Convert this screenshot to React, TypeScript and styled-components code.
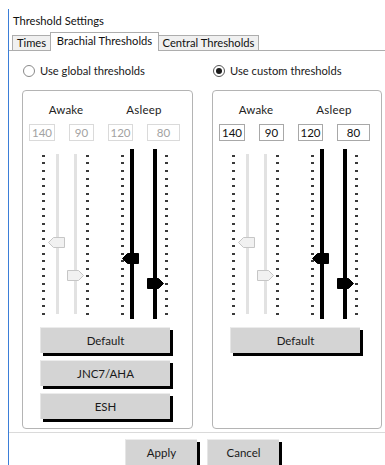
import React from "react";
import styled, { createGlobalStyle, css } from "styled-components";

const Global = createGlobalStyle`
  html, body { margin: 0; padding: 0; background: #ffffff; }
  body { font-family: Lato, "Liberation Sans", sans-serif; font-size: 11px; color: #1a1a1a; }
  * { box-sizing: border-box; }
`;

const Window = styled.div`
  height: 465px;
  padding: 9px 0 0 8px;
  overflow: hidden;
`;

const Frame = styled.div`
  height: 100%;
  border-left: 1px solid #3b7ed8;
  display: flex;
  flex-direction: column;
`;

const Title = styled.div`
  height: 23px;
  padding: 4px 0 0 4px;
  line-height: 16px;
  font-size: 11.2px;
  color: #111;
`;

const TabStrip = styled.div`
  height: 19px;
  display: flex;
  align-items: flex-end;
  padding-left: 3px;
  border-bottom: 1px solid #adadad;
`;

const Tab = styled.div<{ $active?: boolean; $w: number }>`
  width: ${(p) => p.$w}px;
  display: flex;
  align-items: center;
  justify-content: center;
  border: 1px solid #adadad;
  border-bottom: none;
  font-size: 11.2px;
  color: #111;
  white-space: nowrap;
  ${(p) =>
    p.$active
      ? css`
          height: 19px;
          margin: 0 -1px -1px -1px;
          background: #ffffff;
          position: relative;
          z-index: 1;
          padding-bottom: 2px;
        `
      : css`
          height: 15px;
          background: #f0f0f0;
        `}
`;

const TabPage = styled.div`
  height: 383px;
  border-bottom: 1px solid #dadada;
  padding: 12px 0 0 13px;
`;

const Columns = styled.div`
  display: grid;
  grid-template-columns: 171px 170px;
  column-gap: 19px;
`;

const Column = styled.div`
  display: flex;
  flex-direction: column;
`;

const RadioRow = styled.label`
  height: 16px;
  display: flex;
  align-items: center;
  gap: 5px;
  padding-left: 1px;
  font-size: 11.2px;
  color: #1a1a1a;
`;

const RadioCircle = styled.span<{ $checked?: boolean }>`
  width: 12px;
  height: 12px;
  border-radius: 50%;
  border: 1px solid ${(p) => (p.$checked ? "#555" : "#8a8a8a")};
  background: #fff;
  display: flex;
  align-items: center;
  justify-content: center;
  &::after {
    content: "";
    width: 6px;
    height: 6px;
    border-radius: 50%;
    background: ${(p) => (p.$checked ? "#1a1a1a" : "transparent")};
  }
`;

const GroupBox = styled.div`
  margin-top: 11px;
  height: 339px;
  border: 1px solid #b4b4b4;
  border-radius: 4px;
  display: flex;
  flex-direction: column;
`;

const LabelRow = styled.div`
  margin-top: 11px;
  margin-left: 6px;
  height: 16px;
  display: grid;
  grid-template-columns: 74px 82px;
`;

const ColLabel = styled.div`
  text-align: center;
  line-height: 16px;
  font-size: 11.5px;
  letter-spacing: 0.2px;
  color: #222;
`;

const BoxRow = styled.div`
  margin-top: 6px;
  margin-left: 6px;
  display: flex;
  gap: 14px;
`;

const ValueBox = styled.div<{ $w: number; $disabled?: boolean }>`
  width: ${(p) => p.$w}px;
  height: 17px;
  border: 1px solid ${(p) => (p.$disabled ? "#dadada" : "#a8a8a8")};
  color: ${(p) => (p.$disabled ? "#a2a2a2" : "#111")};
  font-size: 11.5px;
  line-height: 15px;
  text-align: center;
  background: #fff;
`;

const SliderRow = styled.div`
  margin-top: 8px;
  margin-left: 19px;
  height: 170px;
  display: flex;
  align-items: flex-start;
`;

const Slider = styled.div<{ $gap: number; $ml: number }>`
  margin-left: ${(p) => p.$ml}px;
  display: flex;
  align-items: flex-start;
  gap: ${(p) => p.$gap}px;
  height: 170px;
`;

const Ticks = styled.div`
  margin-top: 6px;
  width: 3px;
  height: 160px;
  display: flex;
  flex-direction: column;
  justify-content: space-between;
`;

const Tick = styled.span`
  display: block;
  width: 3px;
  height: 2px;
  background: #3a3a3a;
`;

const Track = styled.div<{ $active?: boolean }>`
  position: relative;
  ${(p) =>
    p.$active
      ? css`
          width: 4px;
          height: 170px;
          background: #000;
        `
      : css`
          margin-top: 5px;
          width: 3px;
          height: 160px;
          background: #e2e2e2;
        `}
`;

const ThumbWrap = styled.div<{ $shift: number }>`
  position: absolute;
  left: 50%;
  width: 17px;
  height: 11px;
  margin-left: ${(p) => -8.5 + p.$shift}px;
  display: flex;
`;

const ButtonStack = styled.div`
  margin-top: 8px;
  margin-left: 17px;
  display: flex;
  flex-direction: column;
  gap: 7px;
`;

const PushButton = styled.button<{ $w: number }>`
  width: ${(p) => p.$w}px;
  height: 26px;
  padding: 0;
  border: none;
  border-top: 1px solid #ececec;
  border-left: 1px solid #e6e6e6;
  background: #d4d4d4;
  box-shadow: 3px 3px 0 #000;
  font-family: inherit;
  font-size: 11.5px;
  color: #1a1a1a;
  display: flex;
  align-items: center;
  justify-content: center;
`;

const Footer = styled.div`
  padding: 6px 0 0 116px;
  display: flex;
  gap: 10px;
`;

type SliderDef = { value: number; base: number; ticks: "left" | "right"; gap: number; ml: number; black: boolean };

const Thumb: React.FC<{ dir: "left" | "right"; black: boolean }> = ({ dir, black }) => {
  const fill = black ? "#000" : "#f1f1f1";
  const stroke = black ? "#000" : "#c6c6c6";
  const pts =
    dir === "left"
      ? "0.5,5.5 5.5,0.5 16.5,0.5 16.5,10.5 5.5,10.5"
      : "0.5,0.5 11.5,0.5 16.5,5.5 11.5,10.5 0.5,10.5";
  return (
    <svg width="17" height="11" viewBox="0 0 17 11">
      <polygon points={pts} fill={fill} stroke={stroke} strokeWidth="1" />
    </svg>
  );
};

const sliders: SliderDef[] = [
  { value: 140, base: 205, ticks: "left", gap: 11, ml: 0, black: false },
  { value: 90, base: 198, ticks: "right", gap: 9, ml: 15, black: false },
  { value: 120, base: 205, ticks: "left", gap: 6, ml: 32, black: true },
  { value: 80, base: 198, ticks: "right", gap: 8, ml: 19, black: true },
];

const TICK_COUNT = 22;
const tickKeys = Array.from({ length: TICK_COUNT }, (_, i) => i);

const TickColumn: React.FC = () => (
  <Ticks>
    {tickKeys.map((k) => (
      <Tick key={k} />
    ))}
  </Ticks>
);

const SliderView: React.FC<{ def: SliderDef }> = ({ def }) => {
  const center = def.base - 0.8 * def.value;
  const trackTop = def.black ? 0 : 5;
  const top = Math.round(center - trackTop - 5.5);
  const dir = def.ticks;
  const shift = dir === "left" ? -1.5 : 0;
  const track = (
    <Track $active={def.black}>
      <ThumbWrap $shift={shift} style={{ top }}>
        <Thumb dir={dir} black={def.black} />
      </ThumbWrap>
    </Track>
  );
  return (
    <Slider $gap={def.gap} $ml={def.ml}>
      {def.ticks === "left" ? (
        <>
          <TickColumn />
          {track}
        </>
      ) : (
        <>
          {track}
          <TickColumn />
        </>
      )}
    </Slider>
  );
};

const values = [
  { v: "140", w: 26 },
  { v: "90", w: 25 },
  { v: "120", w: 25 },
  { v: "80", w: 33 },
];

const ThresholdGroup: React.FC<{ disabled?: boolean; buttons: string[] }> = ({ disabled, buttons }) => (
  <GroupBox>
    <LabelRow>
      <ColLabel>Awake</ColLabel>
      <ColLabel>Asleep</ColLabel>
    </LabelRow>
    <BoxRow>
      {values.map((x) => (
        <ValueBox key={x.v} $w={x.w} $disabled={disabled}>
          {x.v}
        </ValueBox>
      ))}
    </BoxRow>
    <SliderRow>
      {sliders.map((s, i) => (
        <SliderView key={i} def={s} />
      ))}
    </SliderRow>
    <ButtonStack>
      {buttons.map((b) => (
        <PushButton key={b} $w={130}>
          {b}
        </PushButton>
      ))}
    </ButtonStack>
  </GroupBox>
);

export default function App() {
  return (
    <>
      <Global />
      <Window>
        <Frame>
          <Title>Threshold Settings</Title>
          <TabStrip>
            <Tab $w={39}>Times</Tab>
            <Tab $w={109} $active>
              Brachial Thresholds
            </Tab>
            <Tab $w={101}>Central Thresholds</Tab>
          </TabStrip>
          <TabPage>
            <Columns>
              <Column>
                <RadioRow>
                  <RadioCircle />
                  Use global thresholds
                </RadioRow>
                <ThresholdGroup disabled buttons={["Default", "JNC7/AHA", "ESH"]} />
              </Column>
              <Column>
                <RadioRow>
                  <RadioCircle $checked />
                  Use custom thresholds
                </RadioRow>
                <ThresholdGroup buttons={["Default"]} />
              </Column>
            </Columns>
          </TabPage>
          <Footer>
            <PushButton $w={72}>Apply</PushButton>
            <PushButton $w={72}>Cancel</PushButton>
          </Footer>
        </Frame>
      </Window>
    </>
  );
}
